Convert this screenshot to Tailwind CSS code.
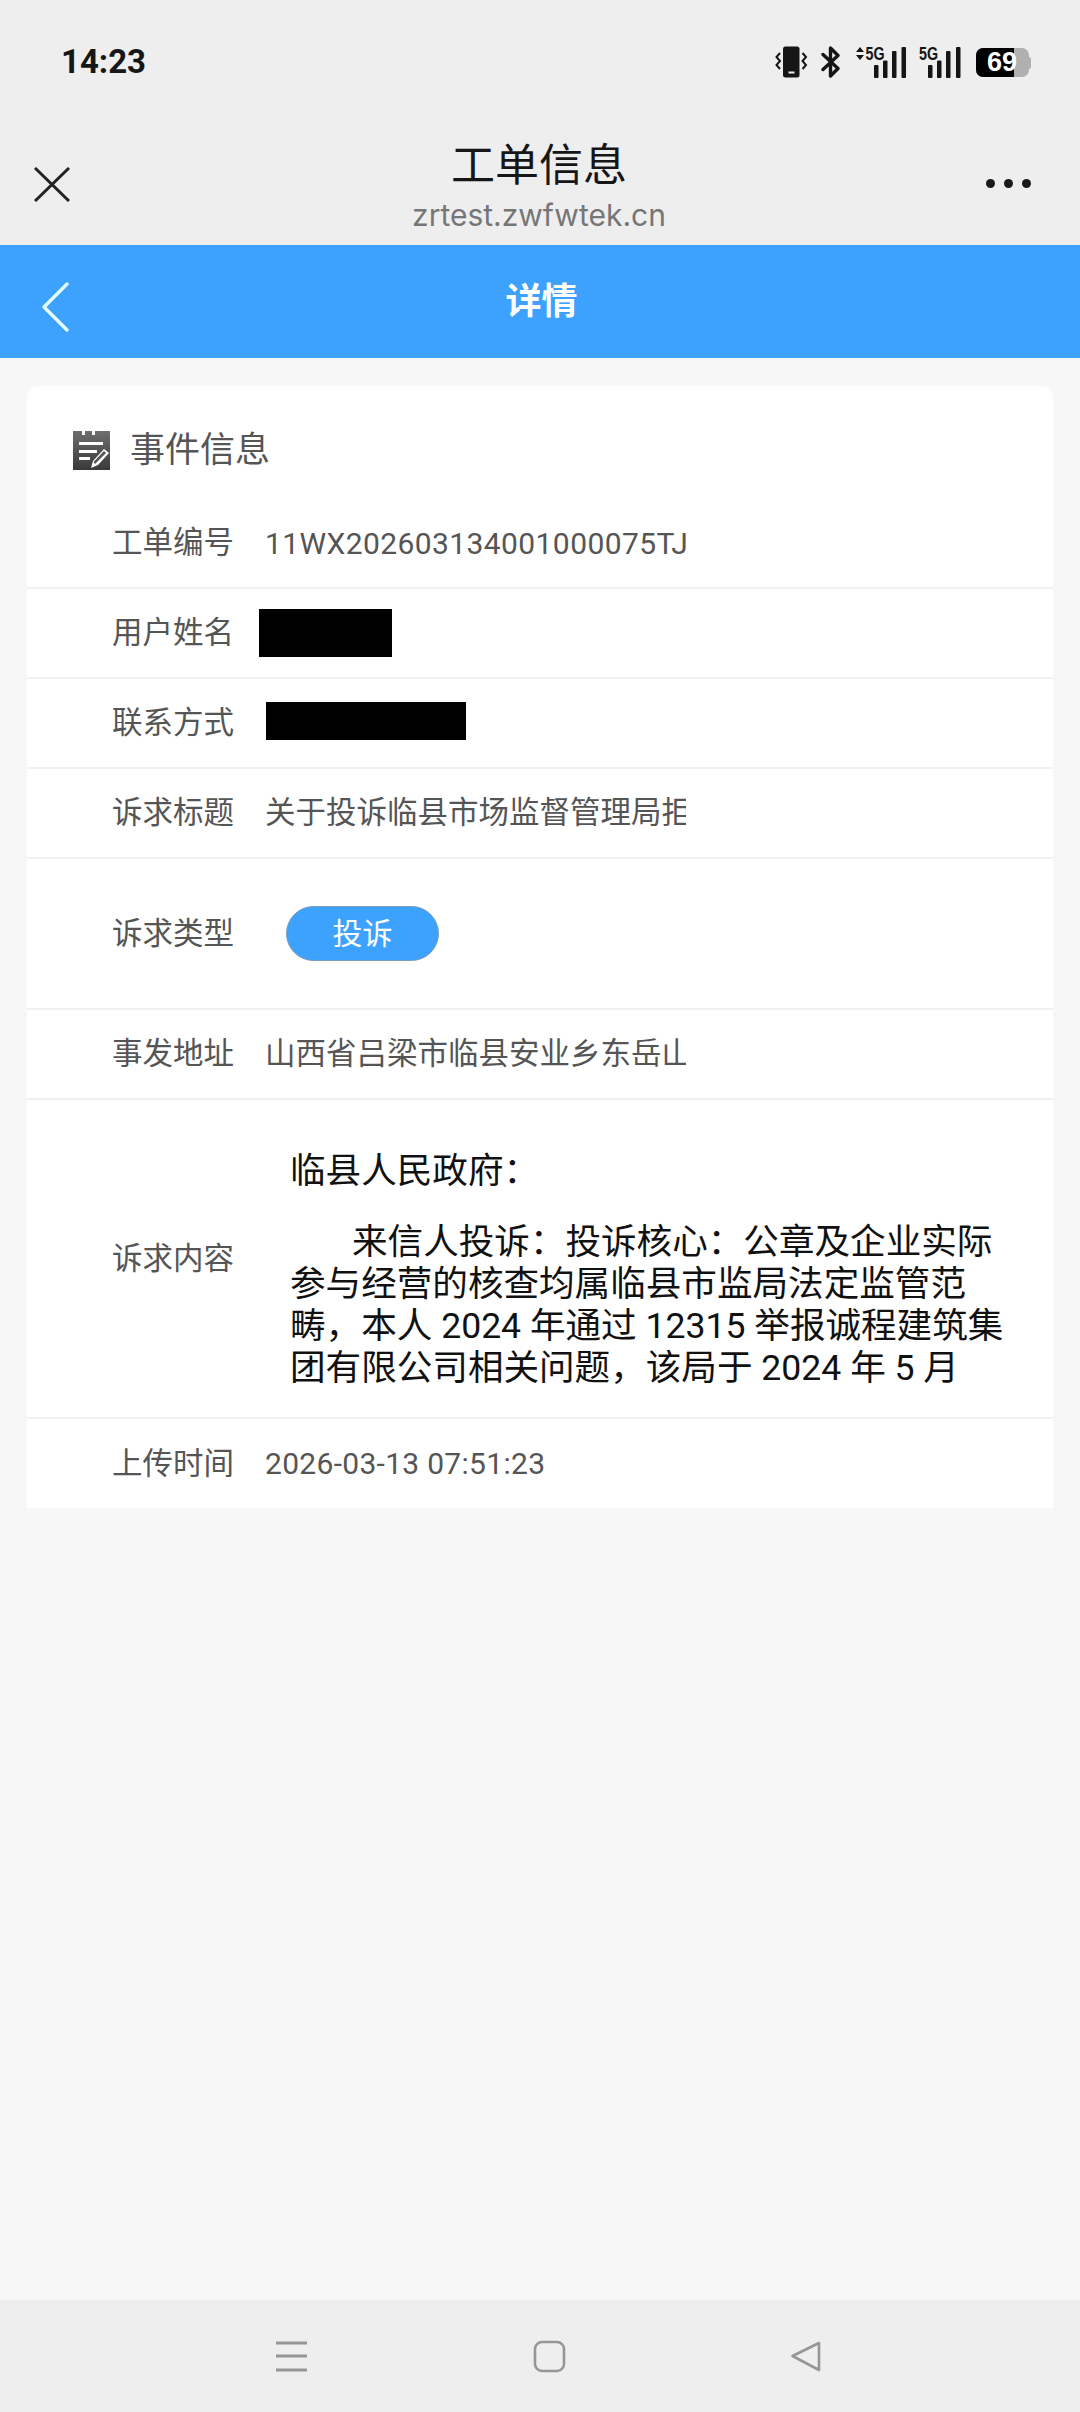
<!DOCTYPE html>
<html lang="zh-CN">
<head>
<meta charset="utf-8">
<script src="https://cdn.jsdelivr.net/npm/@tailwindcss/browser@4"></script>
</head>
<body class="m-0 bg-[#f7f7f7] font-['Roboto','Noto_Sans_CJK_SC',sans-serif]">
<div class="w-[1080px] h-[2412px] flex flex-col overflow-hidden bg-[#f7f7f7]">

  <!-- system + mini-program header -->
  <header class="h-[245px] bg-[#eeeeee] flex flex-col shrink-0">
    <div class="h-[124px] flex items-start justify-between pl-[61px] pr-[49px] pt-[44px]">
      <span class="text-[33px] leading-[36px] font-bold text-[#161616] font-['Roboto',sans-serif]">14:23</span>
      <div class="flex items-start pt-[2px]">
        <svg class="w-[33px] h-[32px]" viewBox="0 0 33 32" fill="none">
          <rect x="8" y="0.5" width="16.5" height="31" rx="2.5" fill="#151515"/>
          <rect x="13.500" y="25.500" width="6" height="2" fill="#eeeeee"/>
          <path d="M5 7 1.500 11l3.500 4-3.500 4 3.500 4M27.500 7l3.500 4-3.500 4 3.500 4-3.500 4" stroke="#151515" stroke-width="2"/>
        </svg>
        <svg class="ml-[13px] w-[20px] h-[32px]" viewBox="0 0 20 32" fill="none">
          <path d="M2 8.500 17 22.500 9.500 30V2L17 9.500 2 23.500" stroke="#151515" stroke-width="3.400" stroke-linejoin="round" stroke-linecap="round"/>
        </svg>
        <svg class="ml-[14px] w-[52px] h-[32px] overflow-visible" viewBox="0 0 52 32">
          <path d="M1 6 5 1l4 5ZM1 9h8l-4 5Z" fill="#151515"/>
          <text x="10.500" y="13.500" font-family="Liberation Sans" font-weight="700" font-size="18" textLength="19" lengthAdjust="spacingAndGlyphs" fill="#151515">5G</text>
          <rect x="19" y="19" width="4.500" height="13" rx="1" fill="#151515"/>
          <rect x="28" y="14.500" width="4.500" height="17.500" rx="1" fill="#151515"/>
          <rect x="37" y="5" width="4.500" height="27" rx="1" fill="#151515"/>
          <rect x="46.500" y="1" width="4.500" height="31" rx="1" fill="#151515"/>
        </svg>
        <svg class="ml-[12px] w-[42px] h-[32px] overflow-visible" viewBox="0 0 42 32">
          <text x="0" y="13.500" font-family="Liberation Sans" font-weight="700" font-size="18" textLength="19" lengthAdjust="spacingAndGlyphs" fill="#151515">5G</text>
          <rect x="9" y="19" width="4.500" height="13" rx="1" fill="#151515"/>
          <rect x="18" y="14.500" width="4.500" height="17.500" rx="1" fill="#151515"/>
          <rect x="27" y="5" width="4.500" height="27" rx="1" fill="#151515"/>
          <rect x="37" y="1" width="4.500" height="31" rx="1" fill="#151515"/>
        </svg>
        <div class="ml-[15px] mt-[2px] relative flex items-center">
          <div class="relative w-[53px] h-[29px] rounded-[7px] bg-[#b0b0b0] overflow-hidden flex items-center">
            <div class="absolute left-0 top-0 h-full w-[38px] bg-black"></div>
            <span class="relative w-full pl-[11px] text-[27px] leading-[29px] font-bold text-white font-['Liberation_Sans',sans-serif]">69</span>
          </div>
          <div class="w-[2px] h-[12px] rounded-r-[2px] bg-[#b0b0b0]"></div>
        </div>
      </div>
    </div>
    <div class="relative flex-1 flex items-start justify-between pl-[34px] pr-[49px]">
      <svg class="mt-[43px] w-[36px] h-[35px]" viewBox="0 0 36 35" fill="none">
        <path d="M1 1 35 34M35 1 1 34" stroke="#222222" stroke-width="3"/>
      </svg>
      <div class="absolute left-0 right-0 top-[17px] flex flex-col items-center pr-[2px]">
        <span class="text-[44px] leading-[50px] text-[#161616]">工单信息</span>
        <span class="text-[30px] leading-[36px] mt-[6px] text-[#767676] font-['Inter',sans-serif]">zrtest.zwfwtek.cn</span>
      </div>
      <div class="mt-[55px] flex gap-[9px]">
        <span class="w-[9px] h-[9px] rounded-full bg-[#1a1a1a]"></span>
        <span class="w-[9px] h-[9px] rounded-full bg-[#1a1a1a]"></span>
        <span class="w-[9px] h-[9px] rounded-full bg-[#1a1a1a]"></span>
      </div>
    </div>
  </header>

  <!-- blue bar -->
  <div class="relative h-[113px] bg-[#3ca2fe] flex items-center justify-center shrink-0 pl-[3px]">
    <svg class="absolute left-[41px] top-[37px] w-[28px] h-[50px]" viewBox="0 0 28 50" fill="none">
      <path d="M26 2 3 25l23 23" stroke="#e6fbff" stroke-width="3.400" stroke-linecap="round" stroke-linejoin="round"/>
    </svg>
    <span class="text-[36px] leading-[44px] font-bold text-white">详情</span>
  </div>

  <main class="flex-1 px-[27px] pt-[28px]">
    <section class="bg-white rounded-t-[10px] rounded-b-[2px]">
      <div class="h-[113px] pt-[46px] pl-[46px] flex items-start">
        <svg class="-mt-[1px] w-[37px] h-[39px]" viewBox="0 0 37 39">
          <defs>
            <linearGradient id="noteGrad" x1="0" y1="0" x2="0" y2="1">
              <stop offset="0" stop-color="#6e6e6e"/>
              <stop offset="1" stop-color="#3a3a3a"/>
            </linearGradient>
          </defs>
          <path d="M0 0h9v4h3V0h7v4h3V0h15v39H0Z" fill="url(#noteGrad)"/>
          <path d="M6 11h24v3H6ZM6 19h18v3H6ZM6 26h11v3H6Z" fill="#ffffff"/>
          <path d="M18 37l2-7 11-12 5 4-11 12Z" fill="#ffffff"/>
          <path d="M20.500 31 31 20l2 2-11 11Z" fill="#555555"/>
        </svg>
        <h2 class="ml-[20px] text-[35px] leading-[38px] font-normal text-[#555555]">事件信息</h2>
      </div>

      <div class="h-[90px] border-b-2 border-[#f1f1f1] flex items-center pl-[85px] text-[30.500px] text-[#555555]">
        <span class="w-[120px] shrink-0 whitespace-nowrap">工单编号</span>
        <span class="ml-[33px] whitespace-nowrap text-[30px] tracking-[0.4px]">11WX202603134001000075TJ</span>
      </div>
      <div class="h-[90px] border-b-2 border-[#f1f1f1] flex items-center pl-[85px] text-[30.500px] text-[#555555]">
        <span class="w-[120px] shrink-0 whitespace-nowrap">用户姓名</span>
        <span class="ml-[27px] w-[133px] h-[48px] bg-black"></span>
      </div>
      <div class="h-[90px] border-b-2 border-[#f1f1f1] flex items-center pl-[85px] text-[30.500px] text-[#555555]">
        <span class="w-[120px] shrink-0 whitespace-nowrap">联系方式</span>
        <span class="ml-[34px] mb-[4px] w-[200px] h-[38px] bg-black"></span>
      </div>
      <div class="h-[90px] border-b-2 border-[#f1f1f1] flex items-center pl-[85px] text-[30.500px] text-[#555555]">
        <span class="w-[120px] shrink-0 whitespace-nowrap">诉求标题</span>
        <span class="ml-[33px] w-[421px] whitespace-nowrap overflow-hidden">关于投诉临县市场监督管理局拒绝履行法定职责</span>
      </div>
      <div class="h-[151px] border-b-2 border-[#f1f1f1] flex items-center pl-[85px] text-[30.500px] text-[#555555]">
        <span class="w-[120px] shrink-0 whitespace-nowrap">诉求类型</span>
        <span class="ml-[54px] w-[153px] h-[55px] rounded-full bg-[#3ca2fe] border border-[#7a9cbc] flex items-center justify-center text-[30px] text-white">投诉</span>
      </div>
      <div class="h-[90px] border-b-2 border-[#f1f1f1] flex items-center pl-[85px] text-[30.500px] text-[#555555]">
        <span class="w-[120px] shrink-0 whitespace-nowrap">事发地址</span>
        <span class="ml-[33px] w-[421px] whitespace-nowrap overflow-hidden">山西省吕梁市临县安业乡东岳山村</span>
      </div>
      <div class="h-[319px] border-b-2 border-[#f1f1f1] flex items-center pl-[85px] text-[30.500px] text-[#555555]">
        <span class="w-[120px] shrink-0 whitespace-nowrap">诉求内容</span>
        <div class="ml-[58px] mt-[22px] w-[720px] text-[35.600px] leading-[42px] text-[#111111]">
          <p class="mb-[29px] whitespace-nowrap">临县人民政府：</p>
          <p class="whitespace-nowrap"><span class="inline-block w-[62px]"></span>来信人投诉：投诉核心：公章及企业实际<br>参与经营的核查均属临县市监局法定监管范<br>畴，本人 2024 年通过 12315 举报诚程建筑集<br>团有限公司相关问题，该局于 2024 年 5 月</p>
        </div>
      </div>
      <div class="h-[89px] flex items-center pl-[85px] text-[30.500px] text-[#555555]">
        <span class="w-[120px] shrink-0 whitespace-nowrap">上传时间</span>
        <span class="ml-[33px] whitespace-nowrap text-[30px] tracking-[0.3px]">2026-03-13 07:51:23</span>
      </div>
    </section>
  </main>

  <!-- navigation bar -->
  <nav class="h-[112px] bg-[#eeeeee] shrink-0 flex items-start pt-[40px] pl-[275px]">
    <svg class="w-[33px] h-[32px]" viewBox="0 0 33 32" fill="none">
      <path d="M1 3h31M1 16h31M1 30h31" stroke="#969696" stroke-width="3"/>
    </svg>
    <svg class="ml-[225px] w-[33px] h-[33px]" viewBox="0 0 33 33" fill="none">
      <rect x="2" y="2" width="29" height="29" rx="7" stroke="#969696" stroke-width="2.600"/>
    </svg>
    <svg class="ml-[223px] w-[33px] h-[33px]" viewBox="0 0 33 33" fill="none">
      <path d="M30 3 3.500 16 30 30Z" stroke="#969696" stroke-width="2.600" stroke-linejoin="round"/>
    </svg>
  </nav>
</div>
</body>
</html>
